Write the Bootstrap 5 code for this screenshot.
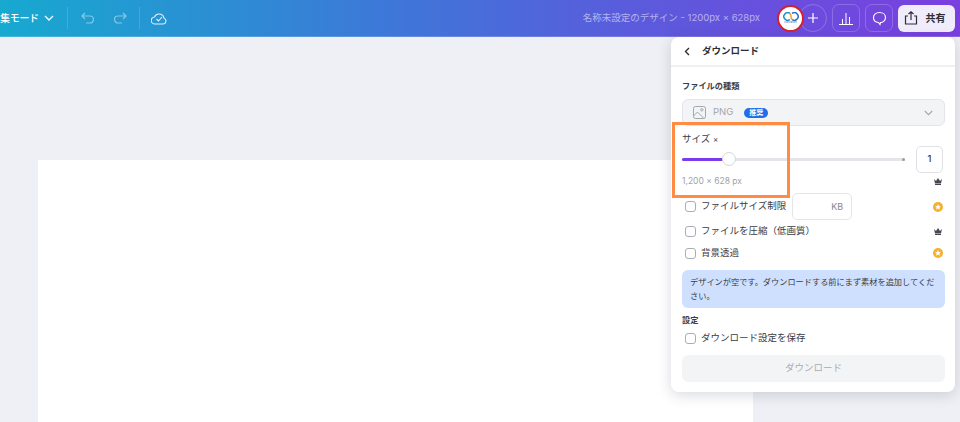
<!DOCTYPE html>
<html lang="ja">
<head>
  <meta charset="UTF-8" />
  <meta name="viewport" content="width=device-width, initial-scale=1" />
  <title>ダウンロード</title>
  <link href="https://cdn.jsdelivr.net/npm/bootstrap@5.3.0/dist/css/bootstrap.min.css" rel="stylesheet" />
  <style>
    html, body { height: 422px; overflow: hidden; }
    body {
      background: #eff0f5;
      font-family: Inter, "Noto Sans CJK JP", sans-serif;
      color: #3a3d45;
      position: relative;
    }
    .topbar {
      height: 37px;
      background: linear-gradient(90deg, #17a9d0 0%, #2b8fd3 22%, #3d78d8 40%, #5a5cdc 65%, #7a3fdf 100%);
      border-bottom: 1px solid rgba(255,255,255,.18);
      color: #fff;
      padding-right: 5px;
    }
    .mode-label { font-size: 10px; font-weight: 500; letter-spacing: -.3px; white-space: nowrap; }
    .bar-sep { width: 1px; height: 22px; background: rgba(255,255,255,.14); }
    .doc-title { font-size: 9.5px; color: rgba(255,255,255,.55); margin-right: 17px; white-space: nowrap; }
    .tool-btn {
      width: 28px; height: 28px; border: 1px solid rgba(255,255,255,.2); border-radius: 7px;
    }
    .add-btn { width: 28px; height: 28px; border: 1px solid rgba(255,255,255,.22); border-radius: 50%; }
    .avatar {
      width: 27px; height: 27px; border: 2px solid #d3202f; border-radius: 50%; background: #fff;
      z-index: 1; margin-right: -5px; padding-bottom: 1px;
    }
    .avatar-name { font-size: 2.5px; line-height: 3px; color: #2b6fb5; }
    .share-btn {
      width: 57px; height: 27px; background: #f1ecfb; color: #2d2f36; border: 0; border-radius: 6px;
      font-size: 10px; font-weight: 700; padding: 0 4px 0 0;
    }
    .stage { height: 385px; padding: 123px 0 0 38px; }
    .canvas-page { width: 715px; height: 262px; background: #fff; }
    .dl-panel {
      position: absolute; left: 671px; top: 37px; width: 284px; height: 355px;
      border: 0; border-radius: 8px; box-shadow: 0 3px 14px rgba(40,45,70,.18);
      color: #3a3d45;
    }
    .panel-head { height: 30px; padding: 1px 0 0 13px; border-bottom: 2px solid #f0f1f4; font-size: 9.5px; font-weight: 600; color: #2d2f36; }
    .panel-body { padding: 13px 10px 0 11px; }
    .sec-title { font-size: 8.2px; font-weight: 600; line-height: 13px; height: 13px; }
    .type-select {
      height: 27px; margin-top: 6px; padding: 0 11px 0 10px; background: #f3f4f6; border: 1px solid #e4e6eb; border-radius: 6px;
      font-size: 9.5px; color: #a3a6ae;
    }
    .rec-tag { background: #1f6fe8; color: #fff; font-size: 7px; font-weight: 700; line-height: 10px; padding: 0 5px; border-radius: 5px; margin-left: 11px; }
    .size-label { font-size: 9.5px; line-height: 14px; height: 14px; margin-top: 6px; }
    .size-x { font-size: 8px; }
    .slider-row { height: 27px; }
    .slider-track { width: 223px; height: 3px; background: #e4e5ea; border-radius: 2px; position: relative; }
    .slider-fill { height: 3px; background: #7c3aed; border-radius: 2px; }
    .slider-thumb {
      position: absolute; left: 40px; top: -6px; width: 14px; height: 14px; border-radius: 50%;
      background: #fff; border: 1px solid #d5d7de;
    }
    .slider-end { position: absolute; right: 0; top: 0; width: 3px; height: 3px; border-radius: 50%; background: #9a9da6; }
    .num-box {
      width: 27px; height: 27px; border: 1px solid #dfe1e6; border-radius: 5px; font-size: 9.5px; font-weight: 500; margin-left: 11px; color: #3a3d45;
    }
    .px-row { height: 16px; font-size: 8.5px; color: #a0a3ab; padding-right: 3px; }
    .opt-row { font-size: 9.5px; padding-left: 3px; padding-right: 2px; height: 22px; margin: 0; }
    .opt-row .form-check-input {
      width: 11px; height: 11px; margin: 0 5px 0 0; border: 1px solid #a9adb6; border-radius: 3px; flex: none; background-color: #fff;
    }
    .opt-size { height: 27px; margin-top: 4px; }
    .opt-save { height: 24px; }
    .kb-box {
      width: 60px; height: 27px; border: 1px solid #e3e5ea; border-radius: 5px; font-size: 9px; color: #85888f; padding-right: 8px; margin-left: 6px;
    }
    .coin { width: 10px; height: 10px; }
    .crown { width: 8px; height: 7px; }
    .info-box {
      background: #cfe0ff; color: #3a3d45; border: 0; border-radius: 6px; font-size: 8.2px; line-height: 14px;
      padding: 5px 7px 5px 8px; margin: 6px 0 0; height: 38px;
    }
    .set-title { font-size: 8.2px; font-weight: 600; line-height: 12px; height: 12px; margin-top: 6px; }
    .dl-btn {
      height: 27px; background: #f3f4f6; border: 0; color: #a9abb1; font-size: 9.5px; padding: 0; margin-top: 5px; border-radius: 6px;
    }
    .btn.dl-btn:disabled { background: #f3f4f6; color: #a9abb1; opacity: 1; }
    .mark-box { position: absolute; left: 672px; top: 122px; width: 118px; height: 76px; border: 3px solid #ff8c42; pointer-events: none; }
  </style>
</head>
<body>

  <header class="topbar d-flex align-items-center">
    <span class="mode-label">集モード</span>
    <svg style="margin-left:5px" width="10" height="6" viewBox="0 0 10 6" fill="none" stroke="#fff" stroke-width="1.3"><path d="M1 1l4 4 4-4"/></svg>
    <span class="bar-sep" style="margin-left:13px"></span>
    <svg style="margin-left:13px" width="14" height="12" viewBox="0 0 14 12" fill="none" stroke="rgba(255,255,255,.45)" stroke-width="1.2"><path d="M4 1L1 4l3 3M1 4h8a3.500 3.500 0 0 1 0 7H5"/></svg>
    <svg style="margin-left:18px" width="14" height="12" viewBox="0 0 14 12" fill="none" stroke="rgba(255,255,255,.45)" stroke-width="1.2"><path d="M10 1l3 3-3 3M13 4H5a3.500 3.500 0 0 0 0 7h4"/></svg>
    <span class="bar-sep" style="margin-left:12px"></span>
    <svg style="margin-left:11px" width="16" height="13" viewBox="0 0 16 13" fill="none" stroke="rgba(255,255,255,.85)" stroke-width="1.1"><path d="M4 12h8a3 3 0 0 0 1-5.800A5 5 0 0 0 3.500 5 3.500 3.500 0 0 0 4 12z"/><path d="M5.500 7l2 2 3.500-4"/></svg>

    <span class="doc-title ms-auto">名称未設定のデザイン - 1200px × 628px</span>
    <span class="avatar d-flex flex-column align-items-center justify-content-center">
      <svg width="18" height="9" viewBox="0 0 18 9" fill="none" stroke-width="1.5"><path d="M8 1.500A3.800 3.800 0 1 0 8 7.500" stroke="#1d8fc9"/><path d="M10 1.500A3.800 3.800 0 1 1 10 7.500" stroke="#2a6fc0"/><path d="M8 1.500Q9 3 9 4.500T10 7.500" stroke="#f0a030"/></svg>
      <span class="avatar-name">Canvanize</span>
    </span>
    <span class="add-btn d-flex align-items-center justify-content-center">
      <svg width="10" height="10" viewBox="0 0 10 10" stroke="#fff" stroke-width="1.2"><path d="M5 0v10M0 5h10"/></svg>
    </span>
    <span class="tool-btn d-flex align-items-center justify-content-center" style="margin-left:5px">
      <svg width="14" height="13" viewBox="0 0 14 13" stroke="#fff" stroke-width="1" fill="none"><path d="M0 12.500h14M3.500 12V7M7 12V1M10.500 12V5"/></svg>
    </span>
    <span class="tool-btn d-flex align-items-center justify-content-center" style="margin-left:5px">
      <svg width="15" height="15" viewBox="0 0 15 15" stroke="#fff" stroke-width="1.1" fill="none"><path d="M7.500 1.500c3.500 0 6 2.200 6 5s-2.500 5-5 5l-.5 2-1.500-2c-2.800-.2-5-2.200-5-5s2.500-5 6-5z"/></svg>
    </span>
    <button type="button" class="btn share-btn d-flex align-items-center justify-content-center gap-2" style="margin-left:5px">
      <svg width="14" height="14" viewBox="0 0 14 14" stroke="#2d2f36" stroke-width="1.2" fill="none"><path d="M4 5H1.500v8h11V5H10M7 9V1M4.500 3L7 .8 9.500 3"/></svg>
      共有
    </button>
  </header>

  <main class="stage">
    <div class="canvas-page"></div>
  </main>

  <section class="card dl-panel">
    <div class="panel-head d-flex align-items-center">
      <svg width="6" height="9" viewBox="0 0 6 9" fill="none" stroke="#2d2f36" stroke-width="1.4"><path d="M5 1L1.500 4.500 5 8"/></svg>
      <span style="margin-left:12px">ダウンロード</span>
    </div>
    <div class="panel-body">
      <div class="sec-title">ファイルの種類</div>
      <div class="type-select d-flex align-items-center">
        <svg width="13" height="13" viewBox="0 0 13 13" fill="none" stroke="#a3a6ae" stroke-width="1"><rect x=".5" y=".5" width="12" height="12" rx="2"/><circle cx="8.800" cy="3.800" r="1.200"/><path d="M.5 10l4-4 6.500 6.500"/></svg>
        <span style="margin-left:7px">PNG</span>
        <span class="rec-tag">推奨</span>
        <svg class="ms-auto" width="9" height="6" viewBox="0 0 9 6" fill="none" stroke="#a3a6ae" stroke-width="1.1"><path d="M.8 1l3.700 3.700L8.200 1"/></svg>
      </div>
      <div class="size-label">サイズ <span class="size-x">×</span></div>
      <div class="slider-row d-flex align-items-center">
        <div class="slider-track">
          <div class="slider-fill" style="width:41px"></div>
          <span class="slider-end"></span>
          <span class="slider-thumb"></span>
        </div>
        <span class="num-box d-flex align-items-center justify-content-center">1</span>
      </div>
      <div class="px-row d-flex align-items-center justify-content-between">
        <span>1,200 × 628 px</span>
        <svg class="crown" viewBox="0 0 8 7" fill="#45484f"><path d="M0 1l2 2 2-3 2 3 2-2-1 4.500H1zM1 6h6v1H1z"/></svg>
      </div>
      <label class="opt-row opt-size d-flex align-items-center">
        <input class="form-check-input" type="checkbox" />
        <span>ファイルサイズ制限</span>
        <span class="kb-box d-flex align-items-center justify-content-end">KB</span>
        <svg class="coin ms-auto" viewBox="0 0 10 10"><circle cx="5" cy="5" r="5" fill="#f6b02c"/><path d="M5 2l.9 2 2.100.2-1.600 1.400.5 2.100L5 6.600 3.100 7.700l.5-2.100L2 4.200 4.100 4z" fill="#fff"/></svg>
      </label>
      <label class="opt-row d-flex align-items-center">
        <input class="form-check-input" type="checkbox" />
        <span>ファイルを圧縮（低画質）</span>
        <svg class="crown ms-auto" style="margin-right:1px" viewBox="0 0 8 7" fill="#45484f"><path d="M0 1l2 2 2-3 2 3 2-2-1 4.500H1zM1 6h6v1H1z"/></svg>
      </label>
      <label class="opt-row d-flex align-items-center">
        <input class="form-check-input" type="checkbox" />
        <span>背景透過</span>
        <svg class="coin ms-auto" viewBox="0 0 10 10"><circle cx="5" cy="5" r="5" fill="#f6b02c"/><path d="M5 2l.9 2 2.100.2-1.600 1.400.5 2.100L5 6.600 3.100 7.700l.5-2.100L2 4.200 4.100 4z" fill="#fff"/></svg>
      </label>
      <div class="alert info-box">デザインが空です。ダウンロードする前にまず素材を追加してください。</div>
      <div class="set-title">設定</div>
      <label class="opt-row opt-save d-flex align-items-center">
        <input class="form-check-input" type="checkbox" />
        <span>ダウンロード設定を保存</span>
      </label>
      <button type="button" class="btn dl-btn w-100" disabled>ダウンロード</button>
    </div>
  </section>

  <div class="mark-box"></div>

  <script src="https://cdn.jsdelivr.net/npm/bootstrap@5.3.0/dist/js/bootstrap.bundle.min.js"></script>
</body>
</html>
